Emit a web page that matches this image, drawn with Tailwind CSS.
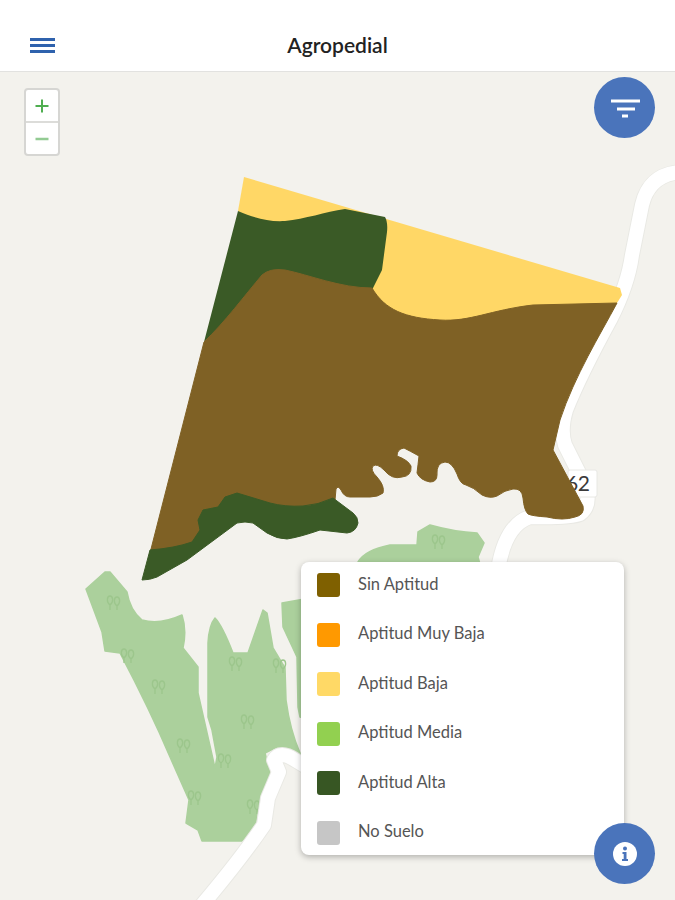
<!DOCTYPE html>
<html lang="en">
<head>
    <meta charset="UTF-8">
    <meta name="viewport" content="width=device-width, initial-scale=1.0">
    <title>Agropedial</title>
    <script src="https://cdn.jsdelivr.net/npm/@tailwindcss/browser@4"></script>
</head>
<body class="bg-white font-['Lato','Liberation_Sans',sans-serif]">
<div class="w-[675px] h-[900px] flex flex-col overflow-hidden">
    <!-- Top bar -->
    <header class="h-[72px] shrink-0 bg-white border-b border-[#e2e2e0] flex items-center relative pt-[20px]">
        <button class="absolute left-[30px] top-[38px] w-[25px] flex flex-col gap-[3.5px]">
            <span class="block h-[2.5px] bg-[#2f62ad]"></span>
            <span class="block h-[2.5px] bg-[#2f62ad]"></span>
            <span class="block h-[2.5px] bg-[#2f62ad]"></span>
        </button>
        <h1 class="w-full text-center text-[21px] font-semibold text-[#222222] leading-none mt-[-3px]">Agropedial</h1>
    </header>

    <!-- Map -->
    <main class="relative flex-1 bg-[#f3f2ed]">
        <svg class="absolute inset-0" width="675" height="828" viewBox="0 72 675 828" fill="none">
            <defs>
                <g id="trees" fill="none" stroke="#9cc68c" stroke-width="1.3">
                    <path d="M-3 7 L-3 2 M-3 2 C-7 -1 -6 -7 -3 -7 C0 -7 1 -1 -3 2Z"/>
                    <path d="M4 7 L4 3 M4 3 C0 0 1 -6 4 -6 C7 -6 8 0 4 3Z"/>
                </g>
            </defs>

            <!-- forest patches -->
            <g fill="#abd09c" stroke="#abd09c" stroke-width="1.5" stroke-linejoin="round">
                <path d="M86 589 L105 572 L110 572 L127 592 Q130 610 142 620 Q160 625 182 615 Q187 630 183 648 L198 667 L198 693 L215 768 L217 757 L212 730 L208 717 L208 643 Q209 625 215 618 Q222 625 233 653 L248 653 L263 610 L267 613 L273 648 L285 668 L286 700 Q290 730 300 753 L300 760 L277 747 L265 753 L270 773 L260 797 L255 827 L242 841 L202 841 L198 830 L186 823 L189 800 L170 757 Q150 710 120 653 L105 651 L102 632Z"/>
                <path d="M282 603 L310 598 L310 720 L300 717 L298 707 L297 657 L283 627Z"/>
                <path d="M350 575 L358 562 Q365 550 390 545 L417 545 L418 532 L430 525 Q455 532 477 533 L484 543 L478 557 L483 575Z"/>
            </g>
            <g>
                <use href="#trees" x="113" y="603"/>
                <use href="#trees" x="127" y="656"/>
                <use href="#trees" x="158" y="687"/>
                <use href="#trees" x="183" y="746"/>
                <use href="#trees" x="194" y="798"/>
                <use href="#trees" x="224" y="761"/>
                <use href="#trees" x="253" y="807"/>
                <use href="#trees" x="235" y="664"/>
                <use href="#trees" x="279" y="666"/>
                <use href="#trees" x="247" y="722"/>
                <use href="#trees" x="438" y="542"/>
            </g>

            <!-- roads -->
            <g stroke-linecap="round" stroke-linejoin="round">
                <path d="M690 172 Q650 170 642 205 L632 255 Q628 285 610 320 Q580 375 566 410 Q560 430 565 445 L585 485 Q592 505 580 514 Q570 518 530 517 Q505 525 498 570" stroke="#e9e9e4" stroke-width="16"/>
                <path d="M690 172 Q650 170 642 205 L632 255 Q628 285 610 320 Q580 375 566 410 Q560 430 565 445 L585 485 Q592 505 580 514 Q570 518 530 517 Q505 525 498 570" stroke="#ffffff" stroke-width="14"/>
                <path d="M320 775 L295 760 Q280 750 274 760 L279 772 L268 798 L264 825 Q240 860 202 905" stroke="#e9e9e4" stroke-width="16"/>
                <path d="M320 775 L295 760 Q280 750 274 760 L279 772 L268 798 L264 825 Q240 860 202 905" stroke="#ffffff" stroke-width="14"/>
            </g>

            <!-- road shield -->
            <rect x="568" y="470" width="29" height="27" rx="2" fill="#ffffff" stroke="#e8e8e4"/>
            <text x="578" y="491" font-family="Lato, sans-serif" font-size="21" text-anchor="middle" fill="#3a3a3a" textLength="24">62</text>

            <!-- parcel -->
            <path d="M244 177 L620 288 L622 295 L617 303 L530 340 L440 340 L372 300 L238 211Z" fill="#ffd766"/>
            <path d="M238 211 C255 218 268 222 285 221 C305 219 325 212 345 209 L385 217 Q388 222 387 232 L382 270 L372 290 L290 320 L204 342Z" fill="#3a5a26"/>
            <path d="M204 342 C225 322 245 295 262 275 Q270 268 285 270 C310 275 340 288 372 288 C385 310 405 318 440 320 C470 322 490 310 533 305 L617 303 C600 335 575 375 560 420 L553 450 L583 506 Q585 515 575 517 Q563 521 547 517 Q532 516 528 514 Q524 510 523 498 Q522 488 513 489 Q505 490 497 496 Q490 499 482 495 Q473 487 466 485 Q460 484 457 474 Q452 462 445 462 Q436 463 437 475 Q437 482 430 482 Q420 480 417 473 Q418 465 419 456 Q410 451 404 448 Q397 449 397 456 Q408 460 411 466 Q412 476 402 477 Q392 480 384 470 Q377 463 373 466 Q370 470 377 477 Q385 486 383 493 Q378 497 370 497 L350 497 Q344 497 341 490 Q338 485 336 489 L335 500 L303 512 L270 510 L237 500 L210 520 L198 546 L150 553Z" fill="#7f6125" stroke="#7f6125" stroke-width="1" stroke-linejoin="round"/>
            <path d="M333 498 Q318 505 303 506 Q285 507 270 503 L237 493 L225 497 L218 507 L203 510 L198 520 L200 530 L192 542 Q175 548 150 550 L142 580 Q150 580 157 577 L187 560 L237 523 Q245 521 253 523 L267 533 Q277 539 287 539 Q300 537 320 530 L347 533 Q356 532 358 523 Q358 517 353 513Z" fill="#3a5a26" stroke="#3a5a26" stroke-width="1" stroke-linejoin="round"/>
        </svg>

        <!-- Zoom control -->
        <div class="absolute left-[24px] top-[16px] w-[36px] h-[68px] bg-white border-2 border-[#d6d6d3] rounded-[4px] flex flex-col">
            <div class="h-[33px] flex items-center justify-center border-b-2 border-[#dcdcd9]">
                <svg width="16" height="16" viewBox="0 0 16 16"><path d="M8 1.5V14.5M1.5 8H14.5" stroke="#4fae50" stroke-width="2"/></svg>
            </div>
            <div class="flex-1 flex items-center justify-center">
                <svg width="16" height="16" viewBox="0 0 16 16"><path d="M1.5 8H14.5" stroke="#93cb93" stroke-width="2.5"/></svg>
            </div>
        </div>

        <!-- Filter button -->
        <button class="absolute left-[594px] top-[5px] w-[61px] h-[61px] rounded-full bg-[#4a74bb] flex items-center justify-center">
            <svg width="30" height="22" viewBox="0 0 30 22"><path d="M1 4H30M7 12H25M12 19H18" stroke="#ffffff" stroke-width="3"/></svg>
        </button>

        <!-- Legend -->
        <div class="absolute left-[301px] top-[490px] w-[323px] h-[293px] bg-white rounded-[8px] shadow-[0_2px_6px_rgba(0,0,0,0.28)] pl-[16px] pt-[11px] flex flex-col gap-[25.5px] text-[16.5px] text-[#555555]">
            <div class="h-[24px] flex items-center gap-[18px]"><span class="w-[23px] h-[24px] rounded-[3px] bg-[#7f6000]"></span><span class="pb-[2px]">Sin Aptitud</span></div>
            <div class="h-[24px] flex items-center gap-[18px]"><span class="w-[23px] h-[24px] rounded-[3px] bg-[#ff9900]"></span><span class="pb-[2px]">Aptitud Muy Baja</span></div>
            <div class="h-[24px] flex items-center gap-[18px]"><span class="w-[23px] h-[24px] rounded-[3px] bg-[#ffd966]"></span><span class="pb-[2px]">Aptitud Baja</span></div>
            <div class="h-[24px] flex items-center gap-[18px]"><span class="w-[23px] h-[24px] rounded-[3px] bg-[#92d050]"></span><span class="pb-[2px]">Aptitud Media</span></div>
            <div class="h-[24px] flex items-center gap-[18px]"><span class="w-[23px] h-[24px] rounded-[3px] bg-[#375623]"></span><span class="pb-[2px]">Aptitud Alta</span></div>
            <div class="h-[24px] flex items-center gap-[18px]"><span class="w-[23px] h-[24px] rounded-[3px] bg-[#c6c6c6]"></span><span class="pb-[2px]">No Suelo</span></div>
        </div>

        <!-- Info button -->
        <button class="absolute left-[594px] top-[751px] w-[61px] h-[61px] rounded-full bg-[#4a74bb] flex items-center justify-center">
            <svg width="26" height="26" viewBox="0 0 26 26">
                <circle cx="13" cy="13" r="12" fill="#ffffff"/>
                <circle cx="13" cy="7.5" r="2" fill="#4a74bb"/>
                <path d="M10.5 11H14.5V18H16V20H10V18H11.7V13H10.5Z" fill="#4a74bb"/>
            </svg>
        </button>
    </main>
</div>
</body>
</html>
